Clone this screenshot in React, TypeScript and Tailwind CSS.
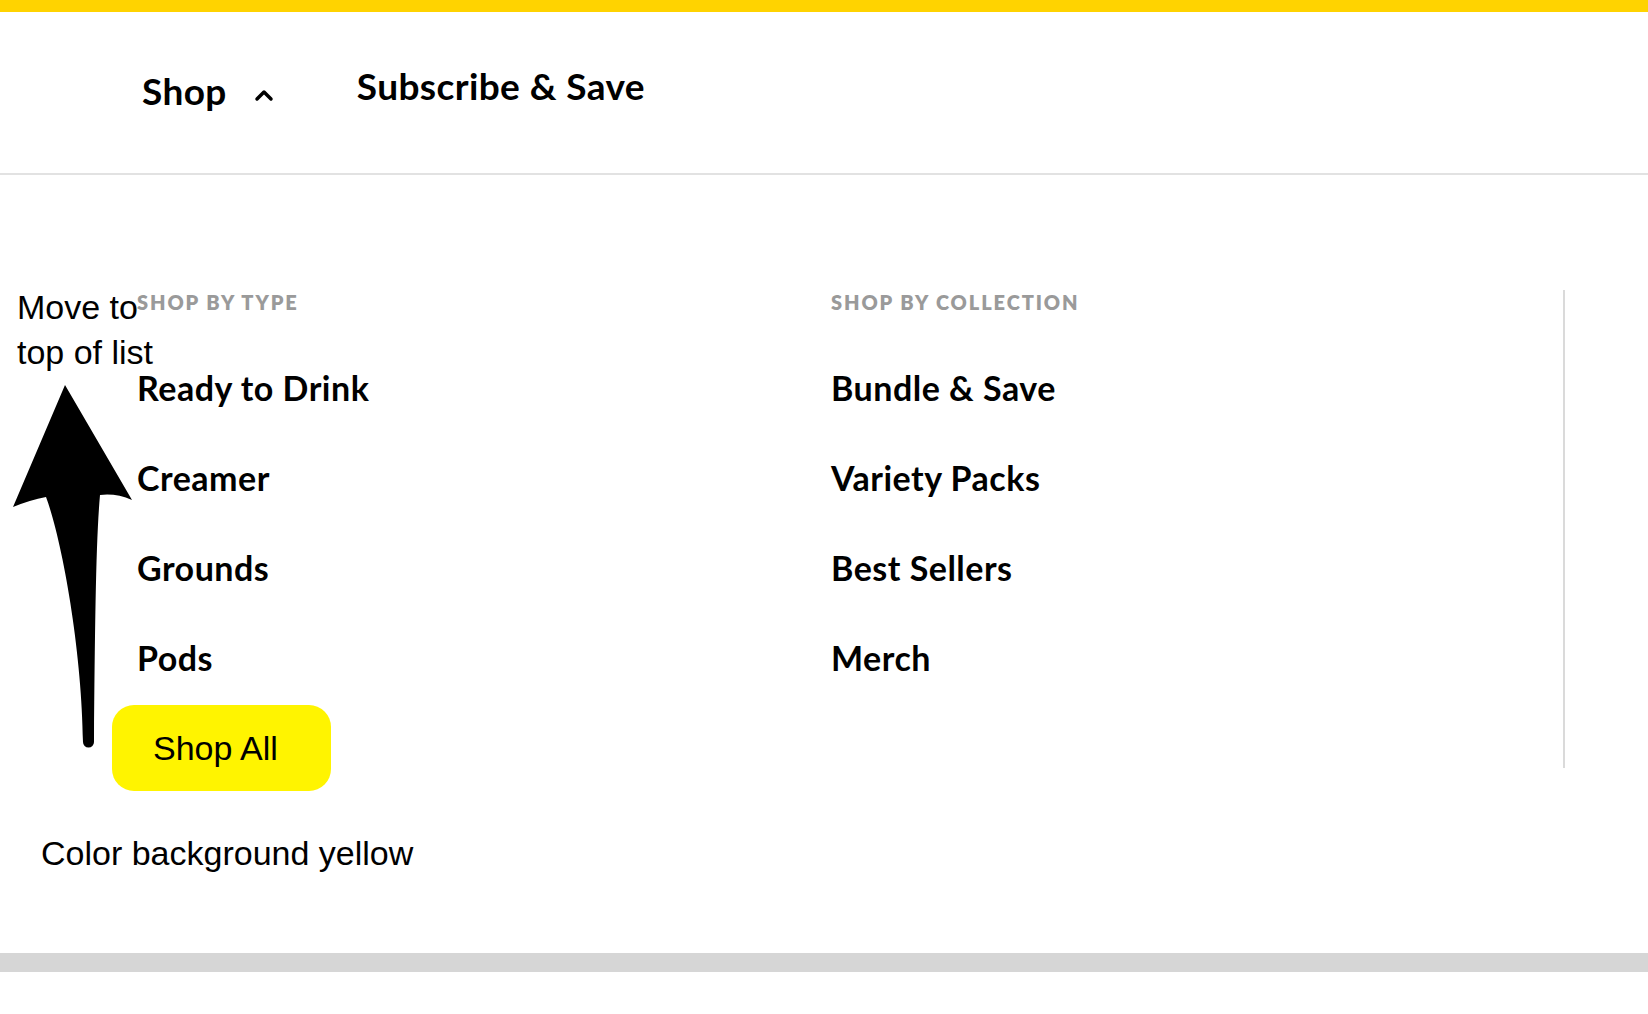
const typeLinks = ["Ready to Drink", "Creamer", "Grounds", "Pods"];
const collectionLinks = ["Bundle & Save", "Variety Packs", "Best Sellers", "Merch"];

function ChevronUp() {
  return (
    <svg width="20" height="14" viewBox="0 0 20 14" fill="none" className="ml-[27px] mt-[8px]">
      <path d="M3 11 L10 4 L17 11" stroke="#000" strokeWidth="3.5" strokeLinecap="round" strokeLinejoin="round" />
    </svg>
  );
}

function BigArrow() {
  return (
    <svg
      className="absolute left-0 top-[370px]"
      width="150"
      height="400"
      viewBox="0 370 150 400"
    >
      <path
        d="M65 385 L132 500 Q116 493 100 495 C96 540 95 620 94 742 A5.5 5.5 0 0 1 83 742 C82 650 62 540 46 497 Q30 500 13 507 Z"
        fill="#000"
      />
    </svg>
  );
}

export default function App() {
  return (
    <div className="relative w-full min-h-[1014px] bg-white font-['Lato',sans-serif] text-black">
      {/* Top accent */}
      <div className="h-3 bg-[#ffd300]"></div>

      {/* Header */}
      <header className="h-[163px] border-b-2 border-[#e2e2e2] flex items-center pl-[142px]">
        <div className="flex items-center mb-[4px]">
          <span className="text-[37px] font-bold tracking-[0.4px]">Shop</span>
          <ChevronUp />
        </div>
        <span className="ml-[83px] mb-[14px] text-[37px] font-bold tracking-[0.4px]">Subscribe &amp; Save</span>
      </header>

      {/* Mega menu */}
      <main className="h-[778px] pt-[115px] flex">
        <div className="w-[831px] pl-[137px] flex flex-col items-start">
          <h3 className="h-6 leading-6 text-[20px] font-extrabold tracking-[1.9px] text-[#9a9a9a]">SHOP BY TYPE</h3>
          <ul className="mt-[54px] flex flex-col gap-[50px]">
            {typeLinks.map((l) => (
              <li key={l} className="h-10 leading-10 text-[34px] font-bold tracking-[0.5px]">{l}</li>
            ))}
          </ul>
          <button className="mt-[27px] -ml-[25px] h-[86px] w-[219px] pl-[41px] text-left rounded-[22px] bg-[#fff400] font-['Liberation_Sans',Arial,sans-serif] text-[34px]">
            Shop All
          </button>
        </div>
        <div className="w-[732px] flex flex-col items-start">
          <h3 className="h-6 leading-6 text-[20px] font-extrabold tracking-[1.9px] text-[#9a9a9a]">SHOP BY COLLECTION</h3>
          <ul className="mt-[54px] flex flex-col gap-[50px]">
            {collectionLinks.map((l) => (
              <li key={l} className="h-10 leading-10 text-[34px] font-bold tracking-[0.5px]">{l}</li>
            ))}
          </ul>
        </div>
        <div className="w-[2px] h-[478px] bg-[#dadada]"></div>
      </main>

      <div className="h-[19px] bg-[#d6d6d6]"></div>

      {/* Review annotations */}
      <div className="absolute left-[17px] top-[285px] font-['Liberation_Sans',Arial,sans-serif] text-[34px] leading-[45px]">
        Move to
        <br />
        top of list
      </div>
      <BigArrow />
      <div className="absolute left-[41px] top-[831px] font-['Liberation_Sans',Arial,sans-serif] text-[34px] leading-[45px]">
        Color background yellow
      </div>
    </div>
  );
}
